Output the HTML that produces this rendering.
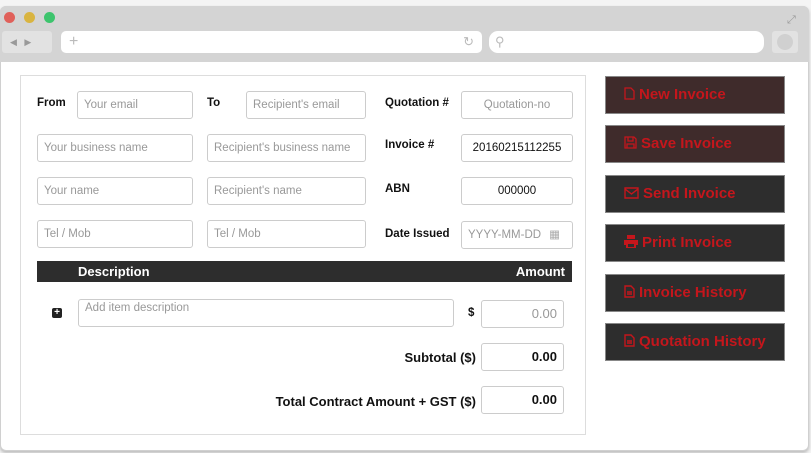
<!DOCTYPE html>
<html><head><style>
*{box-sizing:border-box;margin:0;padding:0}
body{width:811px;height:453px;background:#f4f4f4;font-family:"Liberation Sans",Arial,sans-serif;position:relative;overflow:hidden}
.a{position:absolute}
.win{left:0;top:6px;width:809px;height:445px;border:1px solid #d0d0d0;border-radius:6px;background:#fff;box-shadow:0 2px 3px #bbb}
.bar{left:0;top:6px;width:809px;height:56px;background:#d4d4d4;border-radius:6px 6px 0 0}
.dot{width:11px;height:11px;border-radius:50%;top:12px}
.in{position:absolute;height:28px;border:1px solid #ccc;border-radius:3px;font-size:11.5px;color:#999;padding:0 6px;line-height:26px;background:#fff}
.lb{position:absolute;font-size:11.5px;font-weight:bold;color:#111}
.btn{position:absolute;left:605px;width:180px;height:38px;background:#2d2d2d;border:1px solid #888;color:#c4161c;font-weight:bold;font-size:15px;line-height:36px;padding-left:18px}
.btn svg{vertical-align:-1px;margin-right:4px}
</style></head><body>
<div class="a win"></div>
<div class="a bar"></div>
<div class="a dot" style="left:4px;background:#e0605a"></div>
<div class="a dot" style="left:24px;background:#d9b440"></div>
<div class="a dot" style="left:44px;background:#3dc46d"></div>
<div class="a" style="left:787px;top:14px;color:#999;font-size:11px">⤢</div>
<div class="a" style="left:2px;top:31px;width:50px;height:22px;background:#e2e2e2;border-radius:3px;color:#999;font-size:9px;line-height:22px;padding-left:8px">◀&nbsp;&nbsp;&nbsp;▶</div>
<div class="a" style="left:61px;top:31px;width:421px;height:22px;background:#fff;border-radius:5px;color:#bbb;font-size:16px;line-height:22px;padding-left:8px">+<span style="position:absolute;right:8px;font-size:13px">↻</span></div>
<div class="a" style="left:489px;top:31px;width:275px;height:22px;background:#fff;border-radius:9px;color:#bbb;font-size:13px;line-height:22px;padding-left:6px">⚲</div>
<div class="a" style="left:772px;top:31px;width:26px;height:22px;background:#e2e2e2;border-radius:3px"><div class="a" style="left:5px;top:3px;width:16px;height:16px;border-radius:50%;background:#d0d0d0"></div></div>

<div class="a" style="left:20px;top:75px;width:566px;height:360px;border:1px solid #ddd"></div>

<div class="lb" style="left:37px;top:97px">From</div>
<div class="in" style="left:77px;top:91px;width:116px">Your email</div>
<div class="lb" style="left:207px;top:97px">To</div>
<div class="in" style="left:246px;top:91px;width:120px">Recipient's email</div>
<div class="lb" style="left:385px;top:97px">Quotation #</div>
<div class="in" style="left:461px;top:91px;width:112px;text-align:center">Quotation-no</div>

<div class="in" style="left:37px;top:134px;width:156px">Your business name</div>
<div class="in" style="left:207px;top:134px;width:159px">Recipient's business name</div>
<div class="lb" style="left:385px;top:139px">Invoice #</div>
<div class="in" style="left:461px;top:134px;width:112px;text-align:center;color:#111">20160215112255</div>

<div class="in" style="left:37px;top:177px;width:156px">Your name</div>
<div class="in" style="left:207px;top:177px;width:159px">Recipient's name</div>
<div class="lb" style="left:385px;top:183px">ABN</div>
<div class="in" style="left:461px;top:177px;width:112px;text-align:center;color:#111">000000</div>

<div class="in" style="left:37px;top:220px;width:156px">Tel / Mob</div>
<div class="in" style="left:207px;top:220px;width:159px">Tel / Mob</div>
<div class="lb" style="left:385px;top:228px">Date Issued</div>
<div class="in" style="left:461px;top:221px;width:112px">YYYY-MM-DD <span style="position:absolute;right:12px;color:#aaa">▦</span></div>

<div class="a" style="left:37px;top:261px;width:535px;height:21px;background:#2d2d2d;color:#fff;font-weight:bold;font-size:13px;line-height:21px"><span class="a" style="left:41px">Description</span><span class="a" style="right:7px">Amount</span></div>

<div class="a" style="left:52px;top:308px;width:10px;height:10px;background:#222;border-radius:2px;color:#fff;font-size:10px;line-height:10px;text-align:center;font-weight:bold">+</div>
<div class="in" style="left:78px;top:299px;width:376px;line-height:14px;padding-top:1px">Add item description</div>
<div class="lb" style="left:468px;top:307px">$</div>
<div class="in" style="left:481px;top:300px;width:83px;text-align:right;font-size:13px">0.00</div>
<div class="lb" style="left:300px;top:350px;width:176px;text-align:right;font-size:13px">Subtotal ($)</div>
<div class="in" style="left:481px;top:343px;width:83px;text-align:right;font-size:13px;color:#111;font-weight:bold">0.00</div>
<div class="lb" style="left:200px;top:394px;width:276px;text-align:right;font-size:13px">Total Contract Amount + GST ($)</div>
<div class="in" style="left:481px;top:386px;width:83px;text-align:right;font-size:13px;color:#111;font-weight:bold">0.00</div>

<div class="btn" style="top:76px;background:#3f2b2b"><svg width="11" height="13" viewBox="0 0 11 13"><path d="M1 1h6l3 3v8H1z" fill="none" stroke="#c4161c" stroke-width="1.3"/></svg>New Invoice</div>
<div class="btn" style="top:125px;background:#3f2b2b"><svg width="13" height="13" viewBox="0 0 13 13"><path d="M1 1h9l2 2v9H1z M4 1v4h5V1 M3 8h7v4H3z" fill="none" stroke="#c4161c" stroke-width="1.3"/></svg>Save Invoice</div>
<div class="btn" style="top:175px"><svg width="15" height="12" viewBox="0 0 15 12"><path d="M1 1h13v10H1z M1 2l6.5 5L14 2" fill="none" stroke="#c4161c" stroke-width="1.4"/></svg>Send Invoice</div>
<div class="btn" style="top:224px"><svg width="14" height="13" viewBox="0 0 14 13"><path d="M3 0h8v4H3z M0 5h14v5h-2v3H2v-3H0z" fill="#c4161c"/><path d="M4 9h6v3H4z" fill="#2d2d2d"/></svg>Print Invoice</div>
<div class="btn" style="top:274px"><svg width="11" height="13" viewBox="0 0 11 13"><path d="M1 1h6l3 3v8H1z M3 7h5 M3 9h5" fill="none" stroke="#c4161c" stroke-width="1.4"/></svg>Invoice History</div>
<div class="btn" style="top:323px"><svg width="11" height="13" viewBox="0 0 11 13"><path d="M1 1h6l3 3v8H1z M3 7h5 M3 9h5" fill="none" stroke="#c4161c" stroke-width="1.4"/></svg>Quotation History</div>
</body></html>
